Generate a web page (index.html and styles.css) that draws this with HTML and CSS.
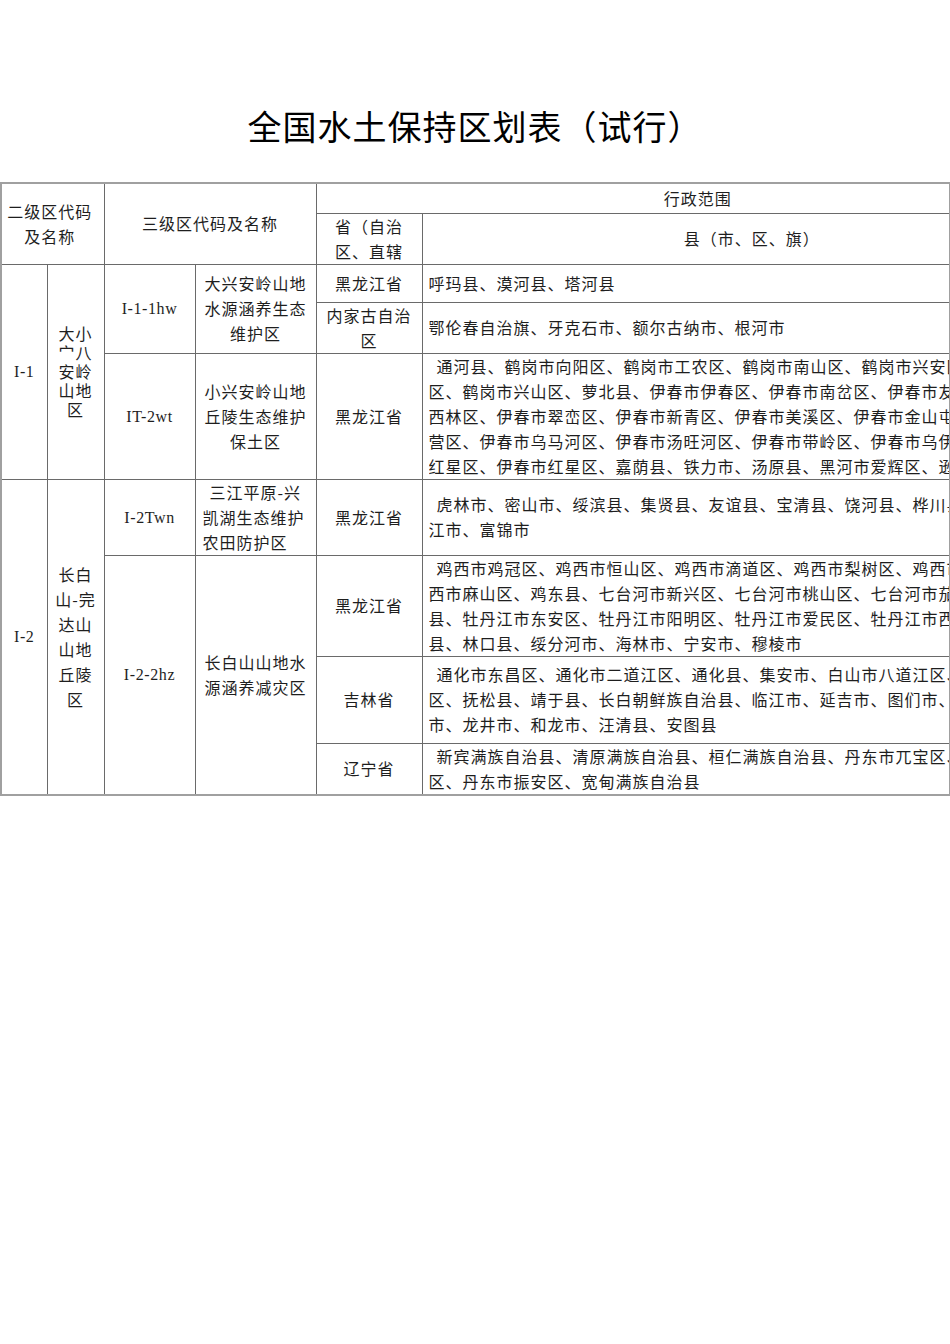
FILE: index.html
```html
<!DOCTYPE html>
<html lang="zh-CN">
<head>
<meta charset="utf-8">
<title>全国水土保持区划表（试行）</title>
<link rel="stylesheet" href="styles.css">
</head>
<body>
<div class="page">
  <h1 class="title">全国水土保持区划表（试行）</h1>
  <table class="zone">
    <colgroup>
      <col class="c-a"><col class="c-b"><col class="c-c"><col class="c-d"><col class="c-e"><col class="c-f">
    </colgroup>
    <thead>
      <tr class="h1">
        <th rowspan="2" colspan="2" class="hd-l2">二级区代码<br>及名称</th>
        <th rowspan="2" colspan="2" class="hd-l3">三级区代码及名称</th>
        <th colspan="2" class="hd-admin">行政范围</th>
      </tr>
      <tr class="h2">
        <th class="hd-prov">省（自治<br>区、直辖</th>
        <th class="hd-county">县（市、区、旗）</th>
      </tr>
    </thead>
    <tbody>
      <tr class="r1">
        <td rowspan="3" class="code2 latin">I-1</td>
        <td rowspan="3" class="name2 tight">大小<br>宀八<br>安岭<br>山地<br>区</td>
        <td rowspan="2" class="code3 latin">I-1-1hw</td>
        <td rowspan="2" class="name3">大兴安岭山地<br>水源涵养生态<br>维护区</td>
        <td class="prov">黑龙江省</td>
        <td class="list"><div class="lines"><div>呼玛县、漠河县、塔河县</div></div></td>
      </tr>
      <tr class="r2">
        <td class="prov">内家古自治<br>区</td>
        <td class="list"><div class="lines"><div>鄂伦春自治旗、牙克石市、额尔古纳市、根河市</div></div></td>
      </tr>
      <tr class="r3">
        <td class="code3 latin">IT-2wt</td>
        <td class="name3">小兴安岭山地<br>丘陵生态维护<br>保土区</td>
        <td class="prov">黑龙江省</td>
        <td class="list"><div class="lines">
          <div class="ind">通河县、鹤岗市向阳区、鹤岗市工农区、鹤岗市南山区、鹤岗市兴安区、鹤岗市东山</div>
          <div>区、鹤岗市兴山区、萝北县、伊春市伊春区、伊春市南岔区、伊春市友好区、伊春市</div>
          <div>西林区、伊春市翠峦区、伊春市新青区、伊春市美溪区、伊春市金山屯区、伊春市五</div>
          <div>营区、伊春市乌马河区、伊春市汤旺河区、伊春市带岭区、伊春市乌伊岭区、伊春市</div>
          <div>红星区、伊春市红星区、嘉荫县、铁力市、汤原县、黑河市爱辉区、逊克县</div>
        </div></td>
      </tr>
      <tr class="r4">
        <td rowspan="4" class="code2 latin">I-2</td>
        <td rowspan="4" class="name2">长白<br>山-完<br>达山<br>山地<br>丘陵<br>区</td>
        <td class="code3 latin">I-2Twn</td>
        <td class="name3 left">三江平原-兴<br>凯湖生态维护<br>农田防护区</td>
        <td class="prov">黑龙江省</td>
        <td class="list"><div class="lines">
          <div class="ind">虎林市、密山市、绥滨县、集贤县、友谊县、宝清县、饶河县、桦川县、佳木斯市、同</div>
          <div>江市、富锦市</div>
        </div></td>
      </tr>
      <tr class="r5">
        <td rowspan="3" class="code3 latin">I-2-2hz</td>
        <td rowspan="3" class="name3">长白山山地水<br>源涵养减灾区</td>
        <td class="prov">黑龙江省</td>
        <td class="list"><div class="lines">
          <div class="ind">鸡西市鸡冠区、鸡西市恒山区、鸡西市滴道区、鸡西市梨树区、鸡西市城子河区、鸡</div>
          <div>西市麻山区、鸡东县、七台河市新兴区、七台河市桃山区、七台河市茄子河区、勃利</div>
          <div>县、牡丹江市东安区、牡丹江市阳明区、牡丹江市爱民区、牡丹江市西安区、东宁</div>
          <div>县、林口县、绥分河市、海林市、宁安市、穆棱市</div>
        </div></td>
      </tr>
      <tr class="r6">
        <td class="prov">吉林省</td>
        <td class="list"><div class="lines">
          <div class="ind">通化市东昌区、通化市二道江区、通化县、集安市、白山市八道江区、白山市江源</div>
          <div>区、抚松县、靖于县、长白朝鲜族自治县、临江市、延吉市、图们市、敦化市、珲春</div>
          <div>市、龙井市、和龙市、汪清县、安图县</div>
        </div></td>
      </tr>
      <tr class="r7">
        <td class="prov">辽宁省</td>
        <td class="list"><div class="lines">
          <div class="ind">新宾满族自治县、清原满族自治县、桓仁满族自治县、丹东市兀宝区、丹东市振兴</div>
          <div>区、丹东市振安区、宽甸满族自治县</div>
        </div></td>
      </tr>
    </tbody>
  </table>
</div>
</body>
</html>
```
FILE: styles.css
```css
html, body {
  margin: 0;
  padding: 0;
  background: #ffffff;
  overflow: hidden;
}

body {
  font-family: "Noto Sans CJK SC", "Noto Sans", sans-serif;
  font-size: 16px;
  line-height: 25px;
  letter-spacing: 1px;
  color: #1e1e1e;
}

.page {
  width: 950px;
  height: 1344px;
  overflow: hidden;
  padding-top: 108px;
  box-sizing: border-box;
}

.title {
  margin: 0 0 38px 0;
  height: 36px;
  font-size: 34px;
  line-height: 36px;
  font-weight: 400;
  letter-spacing: 1px;
  text-align: center;
  color: #000000;
}

.zone {
  width: 949px;
  border-collapse: collapse;
  table-layout: fixed;
  border: 2px solid #a0a0a0;
}

.c-a { width: 46px; }
.c-b { width: 57px; }
.c-c { width: 91px; }
.c-d { width: 121px; }
.c-e { width: 106px; }
.c-f { width: 528px; }

.zone th,
.zone td {
  border: 1px solid #6a6a6a;
  padding: 0;
  font-weight: 400;
  text-align: center;
  vertical-align: middle;
}

.h1 { height: 30px; }
.h2 { height: 51px; }
.r1 { height: 38px; }
.r2 { height: 51px; }
.r3 { height: 125px; }
.r4 { height: 75px; }
.r5 { height: 100px; }
.r6 { height: 87px; }
.r7 { height: 48px; }

.zone .hd-admin { padding-left: 130px; }
.zone .hd-county { padding-left: 132px; }
.zone .hd-l2 { padding-right: 6px; }

.latin {
  font-family: "Liberation Serif", serif;
  letter-spacing: 0.6px;
}

.zone .tight { line-height: 19px; }

.zone .name3 { padding: 0 2px; }
.zone .name3.left {
  text-align: left;
  padding-left: 7px;
  text-indent: 7px;
}

.zone .list {
  text-align: left;
  padding-left: 6px;
}

.list .lines {
  overflow: hidden;
  white-space: nowrap;
}

.list .ind { padding-left: 8px; }
```
